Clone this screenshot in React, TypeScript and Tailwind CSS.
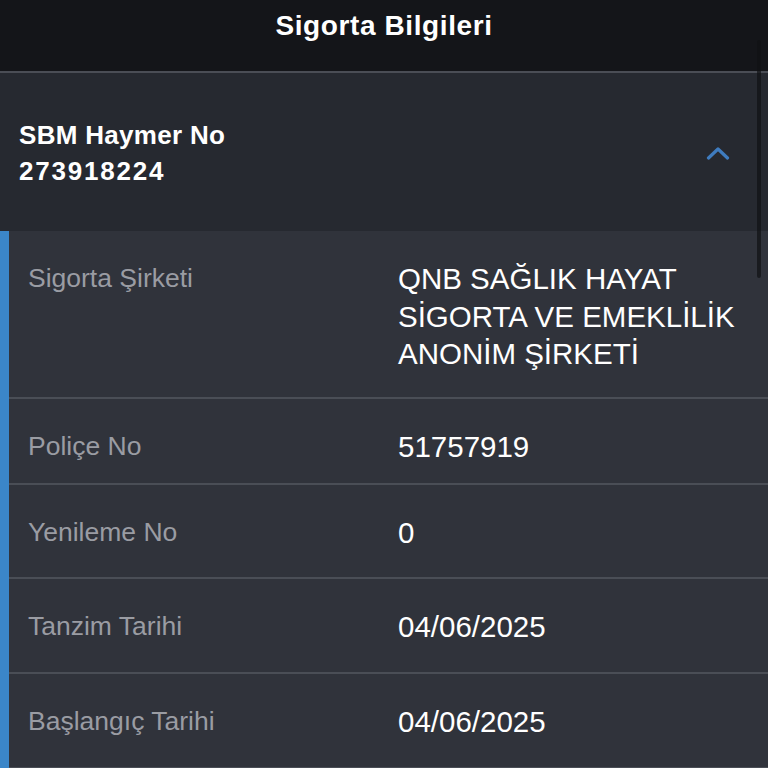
import React from "react";

const rows: { label: string; value: React.ReactNode; h: string }[] = [
  {
    label: "Sigorta Şirketi",
    value: (
      <>
        QNB SAĞLIK HAYAT
        <br />
        SİGORTA VE EMEKLİLİK
        <br />
        ANONİM ŞİRKETİ
      </>
    ),
    h: "h-[166px]",
  },
  { label: "Poliçe No", value: "51757919", h: "h-[84px]" },
  { label: "Yenileme No", value: "0", h: "h-[92px]" },
  { label: "Tanzim Tarihi", value: "04/06/2025", h: "h-[93px]" },
  { label: "Başlangıç Tarihi", value: "04/06/2025", h: "h-[93px]" },
];

export default function App() {
  return (
    <div
      className="relative w-[768px] h-[768px] overflow-hidden bg-[#30333b] flex flex-col"
      style={{ fontFamily: '"Liberation Sans", Arial, sans-serif' }}
    >
      {/* Top bar */}
      <div className="h-[71px] shrink-0 bg-[#141519] flex justify-center pt-[9px]">
        <div className="text-white font-bold text-[28px] tracking-[0.6px] leading-[34px]">Sigorta Bilgileri</div>
      </div>
      <div className="h-[2px] shrink-0 bg-[#4a4d55]" />

      {/* Section header */}
      <div className="h-[158px] shrink-0 bg-[#262930] flex items-center justify-between pl-[19px] pr-[38px]">
        <div className="text-white font-bold text-[26px] leading-[36px] mt-[1px]">
          <div className="tracking-[0.3px]">SBM Haymer No</div>
          <div className="tracking-[1.8px]">273918224</div>
        </div>
        <svg width="24" height="14" viewBox="0 0 24 14" className="mt-[2px]">
          <polyline
            points="2.5,12 12,3 21.5,12"
            fill="none"
            stroke="#3f7cbf"
            strokeWidth="3.2"
            strokeLinecap="round"
            strokeLinejoin="round"
          />
        </svg>
      </div>

      {/* Content */}
      <div className="flex flex-1">
        <div className="w-[9px] shrink-0 bg-[#3b86c8]" />
        <div className="flex-1 flex flex-col">
          {rows.map((r, i) => (
            <React.Fragment key={i}>
              <div className={`${r.h} shrink-0 flex pt-[28px]`}>
                <div className="w-[389px] shrink-0 pl-[19px] text-[#9a9ca3] text-[26.5px] leading-[37.5px] pt-[1px]">
                  {r.label}
                </div>
                <div className="text-white text-[29.5px] leading-[37.5px] pt-[1px]">{r.value}</div>
              </div>
              <div className="h-[2px] shrink-0 bg-[#4a4e56]" />
            </React.Fragment>
          ))}
        </div>
      </div>

      {/* Scroll indicator */}
      <div className="absolute left-[757px] top-[40px] w-[4px] h-[238px] rounded-full bg-[#101114]/70" />
    </div>
  );
}
